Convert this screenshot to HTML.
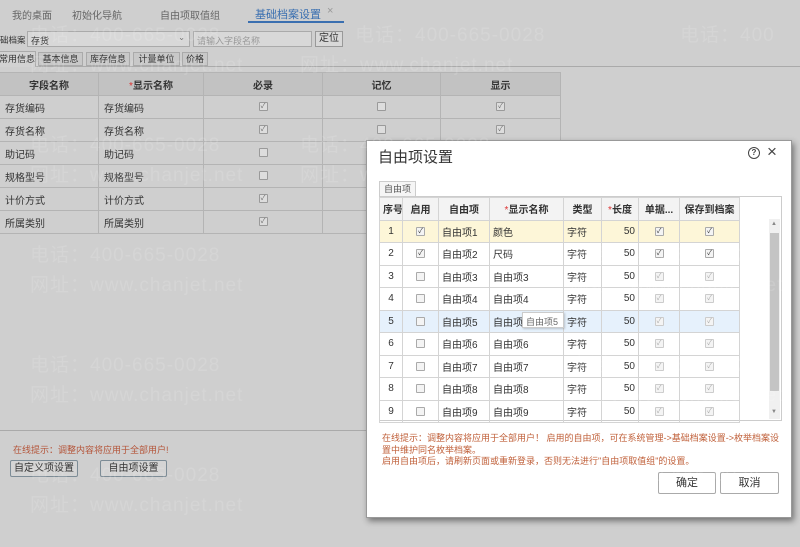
<!DOCTYPE html>
<html><head><meta charset="utf-8"><style>
*{box-sizing:border-box;margin:0;padding:0}
body{width:800px;height:547px;overflow:hidden;background:#cfcfcf;font-family:"Liberation Sans","Noto Sans CJK SC",sans-serif;font-size:10px;color:#333;position:relative}
.a{position:absolute;white-space:nowrap}
.wm{position:absolute;font-size:19px;color:rgba(255,255,255,0.13);white-space:nowrap;letter-spacing:1px;z-index:50;pointer-events:none}
.bt td,.bt th{border:1px solid #b4b4b4;height:23px;padding:0 5px;font-weight:normal}
.bt{position:absolute;left:-1px;top:72px;border-collapse:collapse;table-layout:fixed;width:562px}
.bt th{background:#c2c2c2;font-weight:bold;color:#333}
.cb{display:inline-block;width:9px;height:9px;border:1px solid #9a9a9a;background:#ddd;border-radius:1px;vertical-align:middle;font-size:7px;line-height:7px;text-align:center;color:#666}
.dlg{position:absolute;left:366px;top:140px;width:426px;height:378px;background:#fff;border:1px solid #999;box-shadow:2px 3px 6px rgba(0,0,0,.45)}
.dt{position:absolute;left:12px;top:56px;border-collapse:collapse;table-layout:fixed;width:360px}
.dt td,.dt th{border:1px solid #d4d4d4;height:22.5px;padding:0 3px;font-size:10px;color:#333;white-space:nowrap;overflow:hidden;vertical-align:middle}
.dt th{background:#f3f3f3;font-weight:bold}
.c{text-align:center}.r{text-align:right}
.dt .cb{background:#f4f4f4;border-color:#aaa;color:#333}
.dt .cb.d{color:#aaa;border-color:#ccc}
.req{color:#d33;font-weight:normal}
.btn{position:absolute;border:1px solid #aaa;background:#fff;border-radius:2px;text-align:center}
.st{position:absolute;top:52px;height:14px;border:1px solid #aaa;background:#c8c8c8;font-size:9px;line-height:12px;text-align:center}
</style></head><body>
<!-- top tabs -->
<div class="a" style="left:12px;top:7px;font-size:10px;color:#666">我的桌面</div>
<div class="a" style="left:72px;top:7px;font-size:10px;color:#666">初始化导航</div>
<div class="a" style="left:160px;top:7px;font-size:10px;color:#666">自由项取值组</div>
<div class="a" style="left:255px;top:6px;font-size:11px;color:#3a6fb0">基础档案设置</div>
<div class="a" style="left:327px;top:5px;font-size:11px;color:#999">×</div>
<div class="a" style="left:248px;top:21px;width:96px;height:2px;background:#3a6fb0"></div>
<!-- row 2 -->
<div class="a" style="left:0;top:34px;font-size:8.5px">础档案</div>
<div class="a" style="left:27px;top:31px;width:163px;height:16px;border:1px solid #aaa;background:#d8d8d8;padding:2px 3px;font-size:9px">存货<span style="position:absolute;right:4px;top:1px;font-size:8px;color:#666">⌄</span></div>
<div class="a" style="left:193px;top:31px;width:119px;height:16px;border:1px solid #aaa;background:#d8d8d8;padding:2px 3px;color:#999;font-size:9px">请输入字段名称</div>
<div class="a" style="left:315px;top:31px;width:28px;height:16px;border:1px solid #999;background:#d8d8d8;text-align:center;line-height:14px">定位</div>
<!-- sub tabs -->
<div class="a" style="left:0;top:66px;width:800px;height:1px;background:#aaa"></div>
<div class="st" style="left:-2px;top:51px;width:38px;height:16px;border-bottom:none;background:#d2d2d2;line-height:14px">常用信息</div>
<div class="st" style="left:38px;width:45px">基本信息</div>
<div class="st" style="left:86px;width:44px">库存信息</div>
<div class="st" style="left:133px;width:47px">计量单位</div>
<div class="st" style="left:182px;width:26px">价格</div>
<!-- background table -->
<table class="bt">
<colgroup><col style="width:99px"><col style="width:105px"><col style="width:119px"><col style="width:118px"><col style="width:120px"></colgroup>
<tr><th>字段名称</th><th><span class="req">*</span>显示名称</th><th>必录</th><th>记忆</th><th>显示</th></tr>
<tr><td>存货编码</td><td>存货编码</td><td class="c"><span class="cb">✓</span></td><td class="c"><span class="cb"></span></td><td class="c"><span class="cb">✓</span></td></tr>
<tr><td>存货名称</td><td>存货名称</td><td class="c"><span class="cb">✓</span></td><td class="c"><span class="cb"></span></td><td class="c"><span class="cb">✓</span></td></tr>
<tr><td>助记码</td><td>助记码</td><td class="c"><span class="cb"></span></td><td></td><td></td></tr>
<tr><td>规格型号</td><td>规格型号</td><td class="c"><span class="cb"></span></td><td></td><td></td></tr>
<tr><td>计价方式</td><td>计价方式</td><td class="c"><span class="cb">✓</span></td><td></td><td></td></tr>
<tr><td>所属类别</td><td>所属类别</td><td class="c"><span class="cb">✓</span></td><td></td><td></td></tr>
</table>
<div class="a" style="left:0;top:430px;width:370px;height:1px;background:#aaa"></div>
<div class="a" style="left:13px;top:443px;color:#b4553a;font-size:9px">在线提示：调整内容将应用于全部用户!</div>
<div class="a" style="left:10px;top:460px;width:68px;height:17px;border:1px solid #7d8c96;border-radius:2px;background:#d4d4d4;text-align:center;line-height:15px">自定义项设置</div>
<div class="a" style="left:100px;top:460px;width:67px;height:17px;border:1px solid #7d8c96;border-radius:2px;background:#d4d4d4;text-align:center;line-height:15px">自由项设置</div>
<!-- dialog -->
<div class="dlg">
<div class="a" style="left:11px;top:5px;font-size:15px;color:#333">自由项设置</div>
<div class="a" style="left:381px;top:6px;width:12px;height:12px;border:1.3px solid #444;border-radius:50%;font-size:8px;text-align:center;line-height:10px;font-weight:bold;color:#444">?</div>
<div class="a" style="left:400px;top:1px;font-size:17px;color:#444">×</div>
<div class="a" style="left:12px;top:40px;width:37px;height:15px;border:1px solid #ccc;border-bottom:none;background:#f5f5f5;text-align:center;line-height:14px;font-size:9px;color:#555">自由项</div>
<div class="a" style="left:12px;top:55px;width:403px;height:225px;border:1px solid #ccc"></div>
<table class="dt">
<colgroup><col style="width:23px"><col style="width:36px"><col style="width:51px"><col style="width:74px"><col style="width:38px"><col style="width:37px"><col style="width:41px"><col style="width:60px"></colgroup>
<tr><th class="c">序号</th><th class="c">启用</th><th class="c">自由项</th><th class="c"><span class="req">*</span>显示名称</th><th class="c">类型</th><th class="c"><span class="req">*</span>长度</th><th class="c">单据...</th><th class="c">保存到档案</th></tr>
<tr style="background:#fdf6d8"><td class="c">1</td><td class="c"><span class="cb">✓</span></td><td>自由项1</td><td>颜色</td><td>字符</td><td class="r">50</td><td class="c"><span class="cb">✓</span></td><td class="c"><span class="cb">✓</span></td></tr>
<tr><td class="c">2</td><td class="c"><span class="cb">✓</span></td><td>自由项2</td><td>尺码</td><td>字符</td><td class="r">50</td><td class="c"><span class="cb">✓</span></td><td class="c"><span class="cb">✓</span></td></tr>
<tr><td class="c">3</td><td class="c"><span class="cb"></span></td><td>自由项3</td><td>自由项3</td><td>字符</td><td class="r">50</td><td class="c"><span class="cb d">✓</span></td><td class="c"><span class="cb d">✓</span></td></tr>
<tr><td class="c">4</td><td class="c"><span class="cb"></span></td><td>自由项4</td><td>自由项4</td><td>字符</td><td class="r">50</td><td class="c"><span class="cb d">✓</span></td><td class="c"><span class="cb d">✓</span></td></tr>
<tr style="background:#e6f1fc"><td class="c">5</td><td class="c"><span class="cb"></span></td><td>自由项5</td><td>自由项</td><td>字符</td><td class="r">50</td><td class="c"><span class="cb d">✓</span></td><td class="c"><span class="cb d">✓</span></td></tr>
<tr><td class="c">6</td><td class="c"><span class="cb"></span></td><td>自由项6</td><td>自由项6</td><td>字符</td><td class="r">50</td><td class="c"><span class="cb d">✓</span></td><td class="c"><span class="cb d">✓</span></td></tr>
<tr><td class="c">7</td><td class="c"><span class="cb"></span></td><td>自由项7</td><td>自由项7</td><td>字符</td><td class="r">50</td><td class="c"><span class="cb d">✓</span></td><td class="c"><span class="cb d">✓</span></td></tr>
<tr><td class="c">8</td><td class="c"><span class="cb"></span></td><td>自由项8</td><td>自由项8</td><td>字符</td><td class="r">50</td><td class="c"><span class="cb d">✓</span></td><td class="c"><span class="cb d">✓</span></td></tr>
<tr><td class="c">9</td><td class="c"><span class="cb"></span></td><td>自由项9</td><td>自由项9</td><td>字符</td><td class="r">50</td><td class="c"><span class="cb d">✓</span></td><td class="c"><span class="cb d">✓</span></td></tr>
</table>
<div class="a" style="left:155px;top:171px;width:42px;height:16px;border:1px solid #ccc;background:#fff;font-size:9px;color:#666;padding:2px 3px;box-shadow:1px 1px 2px rgba(0,0,0,.2)">自由项5</div>
<!-- scrollbar -->
<div class="a" style="left:402px;top:78px;width:11px;height:200px;background:#f0f0f0"></div>
<div class="a" style="left:403px;top:92px;width:9px;height:158px;background:#c4c4c4"></div>
<div class="a" style="left:404px;top:80px;font-size:6px;color:#888">▲</div>
<div class="a" style="left:404px;top:268px;font-size:6px;color:#888">▼</div>
<div class="a" style="left:15px;top:292px;font-size:9px;color:#c0603a;line-height:11.5px;white-space:normal;width:400px">在线提示：调整内容将应用于全部用户！ 启用的自由项，可在系统管理-&gt;基础档案设置-&gt;枚举档案设置中维护同名枚举档案。<br>启用自由项后，请刷新页面或重新登录，否则无法进行"自由项取值组"的设置。</div>
<div class="btn" style="left:291px;top:331px;width:58px;height:22px;line-height:20px;font-size:11px">确定</div>
<div class="btn" style="left:353px;top:331px;width:59px;height:22px;line-height:20px;font-size:11px">取消</div>
</div>
<!-- watermarks -->
<div class="wm" style="left:30px;top:20px">电话：400-665-0028</div><div class="wm" style="left:355px;top:20px">电话：400-665-0028</div><div class="wm" style="left:680px;top:20px">电话：400</div>
<div class="wm" style="left:30px;top:50px">网址：www.chanjet.net</div><div class="wm" style="left:300px;top:50px">网址：www.chanjet.net</div>
<div class="wm" style="left:30px;top:130px">电话：400-665-0028</div><div class="wm" style="left:300px;top:130px">电话：400-665-0028</div>
<div class="wm" style="left:30px;top:160px">网址：www.chanjet.net</div><div class="wm" style="left:300px;top:160px">网址：www.chanjet.net</div>
<div class="wm" style="left:30px;top:240px">电话：400-665-0028</div><div class="wm" style="left:570px;top:240px">电话：400-665-0028</div>
<div class="wm" style="left:30px;top:270px">网址：www.chanjet.net</div><div class="wm" style="left:570px;top:270px">网址：www.chanjet.net</div>
<div class="wm" style="left:30px;top:350px">电话：400-665-0028</div><div class="wm" style="left:570px;top:350px">电话：400-665-0028</div>
<div class="wm" style="left:30px;top:380px">网址：www.chanjet.net</div><div class="wm" style="left:570px;top:380px">网址：www.chanjet.net</div>
<div class="wm" style="left:30px;top:460px">电话：400-665-0028</div><div class="wm" style="left:570px;top:460px">电话：400-665-0028</div>
<div class="wm" style="left:30px;top:490px">网址：www.chanjet.net</div><div class="wm" style="left:570px;top:490px">网址：www.chanjet.net</div>
</body></html>
